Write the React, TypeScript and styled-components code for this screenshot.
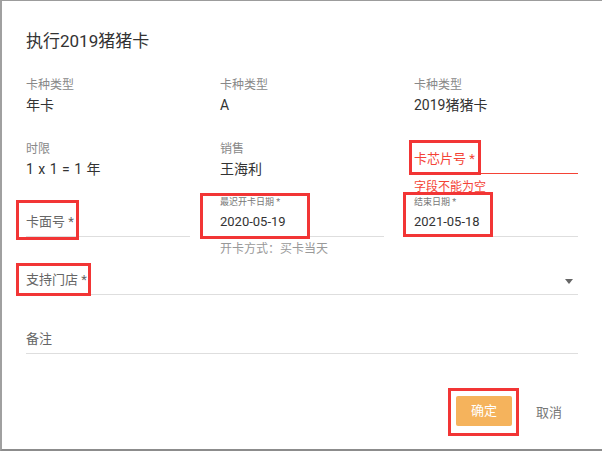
import React from 'react';
import styled, { createGlobalStyle } from 'styled-components';

const Global = createGlobalStyle`
  html, body { margin: 0; padding: 0; background: #fff; }
  body { font-family: Roboto, "Noto Sans CJK SC", sans-serif; color: #333; }
  * { box-sizing: border-box; }
`;

const Dialog = styled.div`
  position: relative;
  width: 602px;
  height: 451px;
  background: #fff;
  border-top: 1px solid #9c9c9c;
  border-left: 2px solid #a0a0a0;
  border-bottom: 2px solid #8c8c8c;
  padding: 28px 24px 0 24px;
  display: flex;
  flex-direction: column;
`;

const Title = styled.h2`
  margin: 0;
  font-size: 17px;
  line-height: 24px;
  font-weight: 400;
  color: #333;
`;

const Row = styled.div<{ $mt: number }>`
  display: grid;
  grid-template-columns: repeat(3, 164px);
  column-gap: 30px;
  align-items: start;
  margin-top: ${(p) => p.$mt}px;
`;

const InfoCell = styled.div`
  padding-top: 8px;
  display: flex;
  flex-direction: column;
`;

const InfoLabel = styled.div`
  font-size: 12px;
  line-height: 16px;
  color: #888;
`;

const InfoValue = styled.div`
  margin-top: 2px;
  font-size: 14px;
  line-height: 20px;
  color: #333;
  word-spacing: 1px;
`;

const Field = styled.div<{ $mt?: number }>`
  display: flex;
  flex-direction: column;
  margin-top: ${(p) => p.$mt ?? 0}px;
`;

const FloatLabel = styled.div`
  height: 12px;
  font-size: 9px;
  line-height: 12px;
  color: #777;
`;

const InputRow = styled.div<{ $error?: boolean; $empty?: boolean }>`
  height: 29px;
  padding-top: 4px;
  font-size: 13px;
  line-height: 20px;
  display: flex;
  justify-content: space-between;
  align-items: flex-start;
  color: ${(p) => (p.$error ? '#f44336' : p.$empty ? '#666' : '#333')};
  border-bottom: 1px solid ${(p) => (p.$error ? '#f44336' : '#dedede')};
`;

const ErrorText = styled.div`
  margin-top: 5px;
  font-size: 12px;
  line-height: 16px;
  color: #f44336;
`;

const HelperText = styled.div`
  margin-top: 4px;
  font-size: 12px;
  line-height: 16px;
  color: #999;
`;

const Caret = styled.span`
  margin-top: 9px;
  margin-right: 5px;
  width: 0;
  height: 0;
  border-left: 4.5px solid transparent;
  border-right: 4.5px solid transparent;
  border-top: 5px solid #666;
`;

const Footer = styled.div`
  margin-top: 42px;
  display: flex;
  justify-content: flex-end;
  align-items: center;
  gap: 8px;
`;

const PrimaryButton = styled.button`
  width: 56px;
  height: 30px;
  border: none;
  border-radius: 2px;
  background: #f5b35c;
  color: #fff;
  font-family: inherit;
  font-size: 13px;
  line-height: 20px;
  padding: 0;
`;

const TextButton = styled.button`
  height: 30px;
  border: none;
  background: transparent;
  color: #777;
  font-family: inherit;
  font-size: 13px;
  padding: 0 16px;
`;

const Mark = styled.div<{ $x: number; $y: number; $w: number; $h: number }>`
  position: absolute;
  left: ${(p) => p.$x - 2}px;
  top: ${(p) => p.$y - 1}px;
  width: ${(p) => p.$w}px;
  height: ${(p) => p.$h}px;
  border: 3px solid #f23535;
  pointer-events: none;
`;

const marks = [
  { x: 409, y: 140, w: 72, h: 35 },
  { x: 16, y: 200, w: 63, h: 40 },
  { x: 200, y: 193, w: 110, h: 46 },
  { x: 403, y: 192, w: 90, h: 45 },
  { x: 16, y: 263, w: 75, h: 33 },
  { x: 448, y: 388, w: 71, h: 48 },
];

export default function App() {
  return (
    <>
      <Global />
      <Dialog>
        <Title>执行2019猪猪卡</Title>
        <Row $mt={16}>
          <InfoCell>
            <InfoLabel>卡种类型</InfoLabel>
            <InfoValue>年卡</InfoValue>
          </InfoCell>
          <InfoCell>
            <InfoLabel>卡种类型</InfoLabel>
            <InfoValue>A</InfoValue>
          </InfoCell>
          <InfoCell>
            <InfoLabel>卡种类型</InfoLabel>
            <InfoValue>2019猪猪卡</InfoValue>
          </InfoCell>
        </Row>
        <Row $mt={18}>
          <InfoCell>
            <InfoLabel>时限</InfoLabel>
            <InfoValue>1 x 1 = 1 年</InfoValue>
          </InfoCell>
          <InfoCell>
            <InfoLabel>销售</InfoLabel>
            <InfoValue>王海利</InfoValue>
          </InfoCell>
          <Field>
            <FloatLabel />
            <InputRow $error>卡芯片号 *</InputRow>
            <ErrorText>字段不能为空</ErrorText>
          </Field>
        </Row>
        <Row $mt={1}>
          <Field>
            <FloatLabel />
            <InputRow $empty>卡面号 *</InputRow>
          </Field>
          <Field>
            <FloatLabel>最迟开卡日期 *</FloatLabel>
            <InputRow>2020-05-19</InputRow>
            <HelperText>开卡方式：买卡当天</HelperText>
          </Field>
          <Field>
            <FloatLabel>结束日期 *</FloatLabel>
            <InputRow>2021-05-18</InputRow>
          </Field>
        </Row>
        <Field $mt={9}>
          <InputRow $empty>
            <span>支持门店 *</span>
            <Caret />
          </InputRow>
        </Field>
        <Field $mt={30}>
          <InputRow $empty>备注</InputRow>
        </Field>
        <Footer>
          <PrimaryButton>确定</PrimaryButton>
          <TextButton>取消</TextButton>
        </Footer>
        {marks.map((m, i) => (
          <Mark key={i} $x={m.x} $y={m.y} $w={m.w} $h={m.h} />
        ))}
      </Dialog>
    </>
  );
}
